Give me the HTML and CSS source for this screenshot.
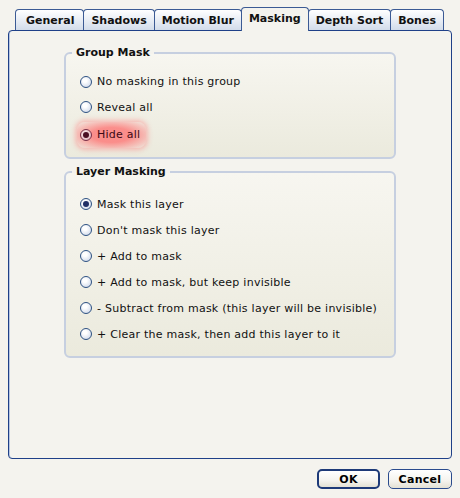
FILE: index.html
```html
<!DOCTYPE html>
<html lang="en">

<head>
    <meta charset="utf-8">
    <title>Layer Properties</title>
    <link rel="stylesheet" href="styles.css">
</head>

<body>
    <div class="tabs">
        <div class="tab tab-first">General</div>
        <div class="tab">Shadows</div>
        <div class="tab">Motion Blur</div>
        <div class="tab active">Masking</div>
        <div class="tab">Depth Sort</div>
        <div class="tab">Bones</div>
    </div>

    <div class="panel">
        <fieldset class="group group-mask">
            <legend>Group Mask</legend>
            <div class="options">
                <label class="option"><span class="radio"></span>No masking in this group</label>
                <label class="option"><span class="radio"></span>Reveal all</label>
                <label class="option highlight"><span class="radio checked"></span>Hide all</label>
            </div>
        </fieldset>

        <fieldset class="group layer-mask">
            <legend>Layer Masking</legend>
            <div class="options">
                <label class="option"><span class="radio checked"></span>Mask this layer</label>
                <label class="option"><span class="radio"></span>Don't mask this layer</label>
                <label class="option"><span class="radio"></span>+ Add to mask</label>
                <label class="option"><span class="radio"></span>+ Add to mask, but keep invisible</label>
                <label class="option"><span class="radio"></span>- Subtract from mask (this layer will be invisible)</label>
                <label class="option"><span class="radio"></span>+ Clear the mask, then add this layer to it</label>
            </div>
        </fieldset>
    </div>

    <div class="buttons">
        <button class="btn default">OK</button>
        <button class="btn">Cancel</button>
    </div>
</body>

</html>
```

FILE: styles.css
```css
body {
    margin: 0;
    padding: 8px 8px 0 8px;
    background-color: #f4f3ee;
    font-family: 'DejaVu Sans', Verdana, sans-serif;
    font-size: 11px;
    color: #111;
    height: 498px;
    box-sizing: border-box;
    overflow: hidden;
}

.tabs {
    display: flex;
    align-items: flex-end;
    padding-left: 7px;
    height: 22px;
    position: relative;
    z-index: 1;
}

.tab {
    flex-shrink: 0;
    white-space: nowrap;
    height: 21px;
    line-height: 21px;
    padding: 0 7px;
    margin-right: -1px;
    font-weight: bold;
    border: 1px solid #3b5a94;
    border-bottom: none;
    border-radius: 4px 4px 0 0;
    background: linear-gradient(#ffffff, #e4eaf3 60%, #d2dcea);
    box-sizing: border-box;
}

.tab-first {
    padding: 0 9px 0 10px;
}

.tab.active {
    height: 24px;
    line-height: 22px;
    margin-bottom: -1px;
    background: #f4f3ee;
    position: relative;
    z-index: 2;
}

.panel {
    height: 429px;
    border: 1px solid #1f4088;
    border-radius: 4px;
    box-shadow: inset 1px 0 0 #b7c6e2;
    padding: 15px 0 0 55px;
    box-sizing: border-box;
}

.group {
    width: 332px;
    margin: 0 0 6px 0;
    padding: 0 0 8px 0;
    border: 2px solid #c6cfe0;
    border-radius: 6px;
    background: linear-gradient(#f7f6f0, #ebeadd);
    box-sizing: border-box;
}

.group legend {
    margin-left: 6px;
    padding: 0 4px;
    font-weight: bold;
    line-height: 13px;
}

.options {
    display: flex;
    flex-direction: column;
    padding: 10px 0 0 14px;
    letter-spacing: 0.25px;
}

.layer-mask {
    padding-bottom: 9px;
}

.layer-mask .options {
    padding-top: 13px;
}

.option {
    display: flex;
    align-items: center;
    height: 26px;
    white-space: nowrap;
}

.group-mask .option {
    height: 25.5px;
}

.radio {
    width: 12px;
    height: 12px;
    margin-right: 5px;
    border: 1px solid #2d5182;
    border-radius: 50%;
    background: radial-gradient(circle at 40% 35%, #ffffff 20%, #d3dcec 80%, #b9c7e0);
    box-sizing: border-box;
    display: flex;
    align-items: center;
    justify-content: center;
}

.radio.checked::after {
    content: "";
    width: 6px;
    height: 6px;
    border-radius: 50%;
    background: #1f2f66;
}

.highlight {
    align-self: flex-start;
    margin-left: -3px;
    padding: 0 6px 0 3px;
    color: #3d0a14;
    background: radial-gradient(ellipse at center, rgba(255, 110, 110, 0.75) 40%, rgba(255, 140, 140, 0.35) 80%, rgba(255, 160, 160, 0) 100%);
    border-radius: 8px;
    box-shadow: 0 0 5px 2px rgba(255, 120, 120, 0.45);
    height: 22px;
    margin-top: 2px;
    margin-bottom: 1.5px;
}

.highlight .radio {
    border-color: #7a3048;
    background: radial-gradient(circle at 40% 35%, #f6dde0 20%, #e2b8c0 80%);
}

.highlight .radio.checked::after {
    background: #4a0f24;
}

.buttons {
    display: flex;
    justify-content: flex-end;
    gap: 8px;
    padding-top: 10px;
}

.btn {
    width: 64px;
    height: 20px;
    padding: 0;
    font-family: 'DejaVu Sans', Verdana, sans-serif;
    font-size: 11px;
    font-weight: bold;
    letter-spacing: 0.3px;
    color: #000;
    border: 1px solid #2a4b8d;
    border-radius: 5px;
    background: linear-gradient(#ffffff, #f4f3ee 60%, #e3e1d4);
}

.btn.default {
    border: 2px solid #1d3a78;
    width: 63px;
}
```
